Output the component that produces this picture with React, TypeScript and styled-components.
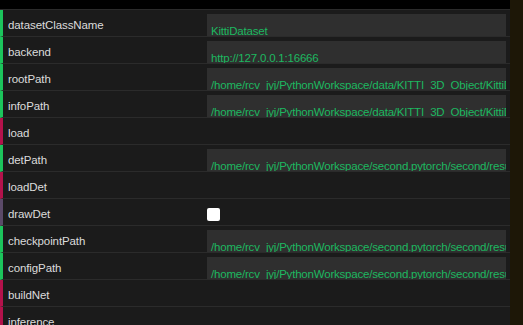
import React from 'react';
import styled, { createGlobalStyle } from 'styled-components';

const GlobalStyle = createGlobalStyle`
    html, body {
        margin: 0;
        padding: 0;
        background-color: #1d1707;
        overflow: hidden;
    }
`;

const StyledPanel = styled.div`
    width: 510px;
    height: 325px;
    background-color: #1b1b1b;
    font-family: "Liberation Sans", Arial, sans-serif;
    font-size: 11.5px;
    overflow: hidden;
`;

const StyledHeader = styled.div`
    height: 9px;
    background-color: #000;
    border-bottom: 1px solid #2b2b2b;
    color: #d8d8d8;
    overflow: hidden;
    padding-left: 12px;
    .title{
        line-height: 12px;
        margin-top: -10px;
    }
`;

const kindColors = {
    text: '#1cc45c',
    button: '#b3124b',
    check: '#5b4a69',
};

type Kind = keyof typeof kindColors;

const StyledRow = styled.div<{ $kind: Kind }>`
    display: flex;
    align-items: stretch;
    height: 26px;
    border-bottom: 1px solid #2b2b2b;
    border-left: 3px solid ${p => kindColors[p.$kind]};
`;

const StyledLabel = styled.div`
    width: 204px;
    padding: 3px 0 0 5px;
    box-sizing: border-box;
    color: #dcdcdc;
    line-height: 24px;
    letter-spacing: -0.1px;
`;

const StyledInput = styled.div`
    margin-top: 4px;
    width: 299px;
    height: 22px;
    background-color: #2f2f2f;
    color: #1db860;
    padding: 9px 0 0 4px;
    box-sizing: border-box;
    line-height: 16px;
    letter-spacing: -0.2px;
    white-space: nowrap;
    overflow: hidden;
`;

const StyledCheck = styled.div`
    display: flex;
    align-items: center;
    padding-top: 4px;
    .box{
        width: 13px;
        height: 13px;
        background-color: #fff;
        border-radius: 2px;
    }
`;

const rootPath = '/home/rcv_jyj/PythonWorkspace/data/KITTI_3D_Object/KittiDataset';
const secondPath = '/home/rcv_jyj/PythonWorkspace/second.pytorch/second/result';

const rows: { name: string; kind: Kind; value?: string }[] = [
    { name: 'datasetClassName', kind: 'text', value: 'KittiDataset' },
    { name: 'backend', kind: 'text', value: 'http://127.0.0.1:16666' },
    { name: 'rootPath', kind: 'text', value: rootPath },
    { name: 'infoPath', kind: 'text', value: rootPath + '/kitti_infos_val.pkl' },
    { name: 'load', kind: 'button' },
    { name: 'detPath', kind: 'text', value: secondPath + '/result.pkl' },
    { name: 'loadDet', kind: 'button' },
    { name: 'drawDet', kind: 'check' },
    { name: 'checkpointPath', kind: 'text', value: secondPath + '/voxelnet.tckpt' },
    { name: 'configPath', kind: 'text', value: secondPath + '/pipeline.config' },
    { name: 'buildNet', kind: 'button' },
    { name: 'inference', kind: 'button' },
];

const App = () => {
    return <>
        <GlobalStyle />
        <StyledPanel>
            <StyledHeader>
                <div className="title">Kitti Controls</div>
            </StyledHeader>
            {rows.map(r => (
                <StyledRow key={r.name} $kind={r.kind}>
                    <StyledLabel>{r.name}</StyledLabel>
                    {r.kind === 'text' && <StyledInput>{r.value}</StyledInput>}
                    {r.kind === 'check' && <StyledCheck><div className="box"></div></StyledCheck>}
                </StyledRow>
            ))}
        </StyledPanel>
    </>
}

export default App;
